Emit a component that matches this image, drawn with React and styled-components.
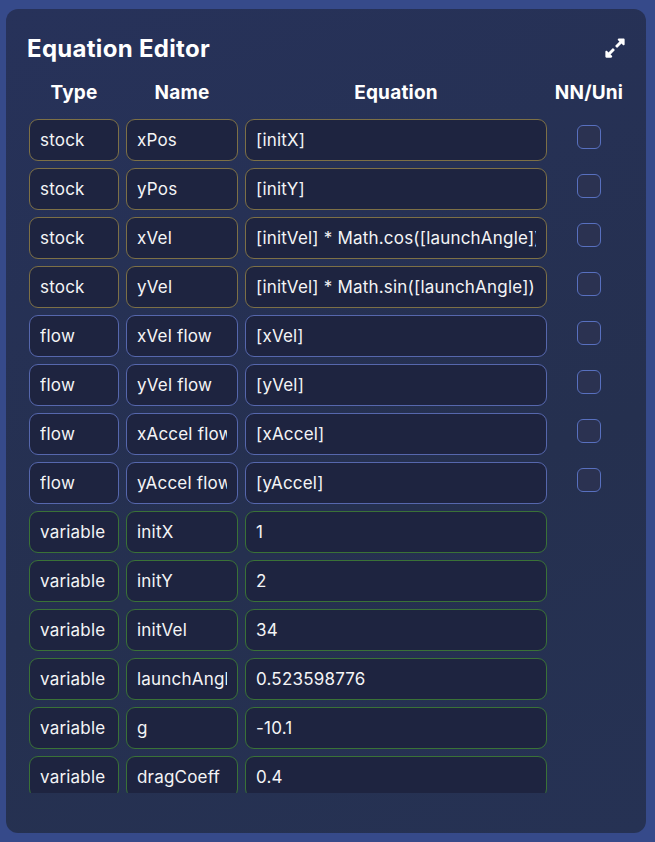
import React from 'react';
import styled, { createGlobalStyle } from 'styled-components';
import { FaExpandAlt } from 'react-icons/fa';

const GlobalStyle = createGlobalStyle`
  body {
    margin: 0;
    background: #364a8a;
    font-family: "Inter", "Noto Sans", sans-serif;
  }
`;

const Page = styled.div`
  padding: 9px 9px 9px 6px;
`;

const Panel = styled.div`
  height: 824px;
  box-sizing: border-box;
  background: linear-gradient(160deg, #27325a 0%, #25304f 60%, #263254 100%);
  border-radius: 12px;
  padding: 24px 22px 40px 23px;
  display: flex;
  flex-direction: column;
  color: #fff;
`;

const TitleBar = styled.div`
  display: flex;
  align-items: center;
  justify-content: space-between;
  height: 30px;
  margin-left: -2px;
`;

const Title = styled.h2`
  margin: 0;
  font-size: 24px;
  font-weight: 700;
  letter-spacing: 0.3px;
`;

const ExpandButton = styled.button`
  background: none;
  border: none;
  color: #fff;
  padding: 0;
  margin-right: -2px;
  display: flex;
  cursor: pointer;
`;

const Grid = styled.div`
  display: grid;
  grid-template-columns: 90px 112px 302px 1fr;
  column-gap: 7px;
`;

const Header = styled(Grid)`
  margin-top: 17px;
  height: 24px;
  align-items: center;
`;

const HeaderCell = styled.div`
  text-align: center;
  font-size: 19px;
  font-weight: 700;
  letter-spacing: 0.2px;
`;

const Scroll = styled.div`
  flex: 1;
  min-height: 0;
  overflow-y: auto;
  margin-top: 15px;
  scrollbar-width: none;
  &::-webkit-scrollbar { display: none; }
`;

const Rows = styled(Grid)`
  row-gap: 7px;
`;

const borders = {
  stock: '#7d7046',
  flow: '#5667ad',
  variable: '#3a7237',
};

const Field = styled.input`
  box-sizing: border-box;
  width: 100%;
  height: 42px;
  background: #1e2440;
  border: 1px solid ${p => borders[p.$kind]};
  border-radius: 9px;
  color: #f4f4f6;
  font-family: inherit;
  font-size: 17px;
  letter-spacing: 0.2px;
  padding: 0 10px;
  outline: none;
`;

const CheckCell = styled.div`
  display: flex;
  justify-content: center;
  padding-top: 6px;
`;

const Check = styled.span`
  box-sizing: border-box;
  width: 24px;
  height: 24px;
  border: 1px solid #5870bf;
  border-radius: 6px;
  background: #2b3251;
`;

const rows = [
  ['stock', 'xPos', '[initX]'],
  ['stock', 'yPos', '[initY]'],
  ['stock', 'xVel', '[initVel] * Math.cos([launchAngle])'],
  ['stock', 'yVel', '[initVel] * Math.sin([launchAngle])'],
  ['flow', 'xVel flow', '[xVel]'],
  ['flow', 'yVel flow', '[yVel]'],
  ['flow', 'xAccel flow', '[xAccel]'],
  ['flow', 'yAccel flow', '[yAccel]'],
  ['variable', 'initX', '1'],
  ['variable', 'initY', '2'],
  ['variable', 'initVel', '34'],
  ['variable', 'launchAngle', '0.523598776'],
  ['variable', 'g', '-10.1'],
  ['variable', 'dragCoeff', '0.4'],
  ['variable', 'drag', '0.5 * [dragCoeff]'],
];

export default function App() {
  return (
    <Page>
      <GlobalStyle />
      <Panel>
        <TitleBar>
          <Title>Equation Editor</Title>
          <ExpandButton aria-label="Expand">
            <FaExpandAlt size={22} />
          </ExpandButton>
        </TitleBar>
        <Header>
          <HeaderCell>Type</HeaderCell>
          <HeaderCell>Name</HeaderCell>
          <HeaderCell>Equation</HeaderCell>
          <HeaderCell>NN/Uni</HeaderCell>
        </Header>
        <Scroll>
          <Rows>
            {rows.map(([type, name, eq]) => (
              <React.Fragment key={name}>
                <Field $kind={type} defaultValue={type} readOnly />
                <Field $kind={type} defaultValue={name} />
                <Field $kind={type} defaultValue={eq} />
                <CheckCell>{type !== 'variable' && <Check />}</CheckCell>
              </React.Fragment>
            ))}
          </Rows>
        </Scroll>
      </Panel>
    </Page>
  );
}
